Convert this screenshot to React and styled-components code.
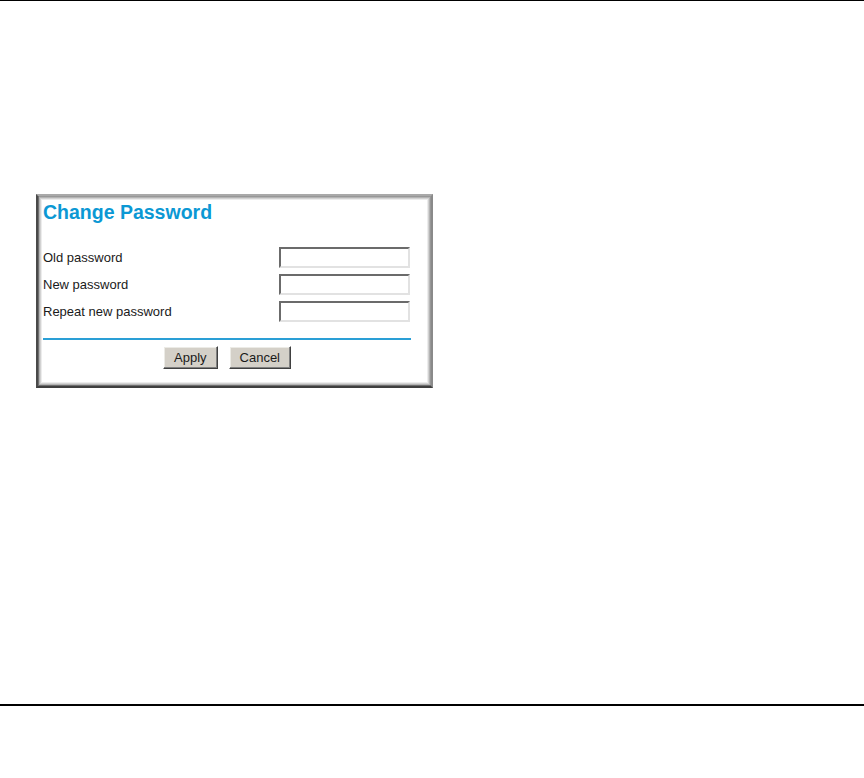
import React from "react";
import styled, { createGlobalStyle } from "styled-components";

const GlobalStyle = createGlobalStyle`
  html, body {
    margin: 0;
    padding: 0;
    background: #fff;
  }
  body {
    width: 864px;
    height: 778px;
    overflow: hidden;
    font-family: "Liberation Sans", Arial, sans-serif;
  }
`;

const Page = styled.div`
  width: 864px;
  height: 778px;
  display: flex;
  flex-direction: column;
`;

const Rule = styled.div`
  width: 100%;
  height: ${(p) => p.$thick}px;
  background: #000;
  margin-top: ${(p) => p.$offset || 0}px;
  flex-shrink: 0;
`;

// grey bevelled frame round the form
const Frame = styled.div`
  box-sizing: border-box;
  width: 397px;
  height: 194px;
  margin: 193px 0 0 36px;
  padding: 5px 20px 17px 5px;
  background: #fff;
  border: 2px solid;
  border-color: #a9a9a9 #8a8a8a #3f3f3f #4a4a4a;
  box-shadow: inset 1px -1px 0 #6e6e6e, inset 0 0 0 1px #979797,
    inset 0 0 0 2px #b4b4b4, inset 0 0 0 3px #d2d2d2,
    inset 0 0 0 4px #ececec;
  display: flex;
  flex-direction: column;
  flex-shrink: 0;
`;

const Title = styled.h1`
  margin: 0;
  font-size: 19.5px;
  line-height: 22px;
  font-weight: bold;
  color: #0b98d4;
`;

const Fields = styled.div`
  margin-top: 20.5px;
  display: flex;
  flex-direction: column;
`;

const Row = styled.div`
  height: 27px;
  display: flex;
  align-items: center;
  justify-content: space-between;
`;

const Label = styled.span`
  font-size: 13px;
  color: #1a1a1a;
`;

const Input = styled.input`
  box-sizing: border-box;
  width: 131px;
  height: 21px;
  margin: 0 1px 0 0;
  padding: 0 3px;
  background: #fff;
  border: 2px solid;
  border-color: #6b6b6b #e2e2e2 #e2e2e2 #6b6b6b;
  outline: none;
`;

const Divider = styled.div`
  margin-top: 13.5px;
  height: 2px;
  background: #2a9fd6;
`;

const Buttons = styled.div`
  margin-top: 6px;
  display: flex;
  justify-content: center;
  gap: 11px;
`;

const Button = styled.button`
  box-sizing: border-box;
  height: 23px;
  padding: 0 10px;
  font-family: "Liberation Sans", Arial, sans-serif;
  font-size: 13px;
  color: #1a1a1a;
  background: #d4d0c8;
  border: 1px solid;
  border-color: #fff #404040 #404040 #fff;
  box-shadow: inset -1px -1px 0 #808080, inset 1px 1px 0 #ecebe6;
  border-radius: 0;
`;

const fields = ["Old password", "New password", "Repeat new password"];

export default function App() {
  return (
    <Page>
      <GlobalStyle />
      <Rule $thick={1} />
      <Frame>
        <Title>Change Password</Title>
        <Fields>
          {fields.map((f) => (
            <Row key={f}>
              <Label>{f}</Label>
              <Input type="password" />
            </Row>
          ))}
        </Fields>
        <Divider />
        <Buttons>
          <Button>Apply</Button>
          <Button>Cancel</Button>
        </Buttons>
      </Frame>
      <Rule $thick={2} $offset={316} />
    </Page>
  );
}
